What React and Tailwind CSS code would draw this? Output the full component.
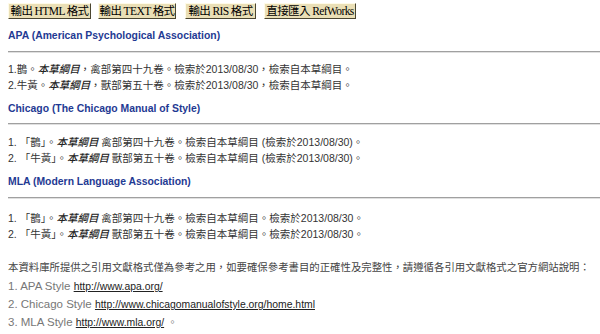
export default function App() {
  const btn =
    "h-[16px] bg-[#eadfb6] border border-t-[#fffbe8] border-l-[#fffbe8] border-r-[#4a4530] border-b-[#4a4530] text-[11.5px] leading-[14px] text-black flex items-center justify-center whitespace-nowrap overflow-hidden tracking-[-0.6px]";
  const serif = { fontFamily: '"Liberation Serif", "Noto Sans CJK TC", serif' };
  const sans = { fontFamily: 'Arial, "Liberation Sans", "Noto Sans CJK TC", sans-serif' };
  const h = "h-[22px] flex items-center text-[10.4px] font-bold text-[#1f3a93] whitespace-nowrap";
  const hr = "h-[2px] border-t border-t-[#a0a0a0] border-b border-b-[#e0e0e0]";
  const line = "h-[16px] flex items-center text-[10.5px] text-[#333] whitespace-nowrap";
  const it = "italic font-medium text-[#222]";
  return (
    <div className="w-[600px] h-[334px] bg-white overflow-hidden pl-[8px] pt-[3px]" style={sans}>
      <div className="flex" style={serif}>
        <div className={btn + " w-[83px]"}>輸出 HTML 格式</div>
        <div className={btn + " w-[78px] ml-[7px]"}>輸出 TEXT 格式</div>
        <div className={btn + " w-[71px] ml-[9px]"}>輸出 RIS 格式</div>
        <div className={btn + " w-[92px] ml-[8px]"}>直接匯入 RefWorks</div>
      </div>
      <div className={h + " mt-[6px]"}>APA (American Psychological Association)</div>
      <div className={hr + " mt-[4px]"}></div>
      <div className="mt-[9px]">
        <div className={line}>1.鵲。<span className={it}>本草綱目</span>，禽部第四十九卷。檢索於2013/08/30，檢索自本草綱目。</div>
        <div className={line}>2.牛黃。<span className={it}>本草綱目</span>，獸部第五十卷。檢索於2013/08/30，檢索自本草綱目。</div>
      </div>
      <div className={h + " mt-[4px]"}>Chicago (The Chicago Manual of Style)</div>
      <div className={hr + " mt-[3px]"}></div>
      <div className="mt-[10px]">
        <div className={line}>1.&nbsp;「鵲」。<span className={it}>本草綱目</span>&nbsp;禽部第四十九卷。檢索自本草綱目 (檢索於2013/08/30)。</div>
        <div className={line}>2.&nbsp;「牛黃」。<span className={it}>本草綱目</span>&nbsp;獸部第五十卷。檢索自本草綱目 (檢索於2013/08/30)。</div>
      </div>
      <div className={h + " mt-[4px]"}>MLA (Modern Language Association)</div>
      <div className={hr + " mt-[4px]"}></div>
      <div className="mt-[12px]">
        <div className={line}>1.&nbsp;「鵲」。<span className={it}>本草綱目</span>&nbsp;禽部第四十九卷。檢索自本草綱目。檢索於2013/08/30。</div>
        <div className={line}>2.&nbsp;「牛黃」。<span className={it}>本草綱目</span>&nbsp;獸部第五十卷。檢索自本草綱目。檢索於2013/08/30。</div>
      </div>
      <div className="mt-[16px] text-[#444]">
        <div className="h-[18px] flex items-center whitespace-nowrap text-[10.4px]">本資料庫所提供之引用文獻格式僅為參考之用，如要確保參考書目的正確性及完整性，請遵循各引用文獻格式之官方網站說明：</div>
        <div className="h-[18px] flex items-center whitespace-nowrap text-[#777] text-[11.5px] mt-[1px]">1. APA Style&nbsp;<span className="underline text-[#222] text-[10.4px]">http://www.apa.org/</span></div>
        <div className="h-[18px] flex items-center whitespace-nowrap text-[#777] text-[11.5px]">2. Chicago Style&nbsp;<span className="underline text-[#222] text-[10.4px]">http://www.chicagomanualofstyle.org/home.html</span></div>
        <div className="h-[17px] flex items-center whitespace-nowrap text-[#777] text-[11.5px]">3. MLA Style&nbsp;<span className="underline text-[#222] text-[10.4px]">http://www.mla.org/</span>&nbsp;<span className="text-[10.4px]">。</span></div>
      </div>
    </div>
  );
}
